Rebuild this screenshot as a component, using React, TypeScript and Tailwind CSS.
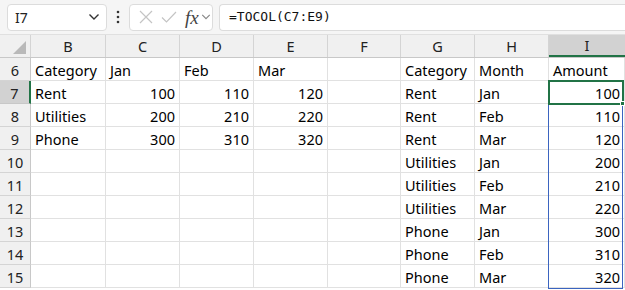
import React from 'react';

const cols = ['B', 'C', 'D', 'E', 'F', 'G', 'H', 'I'];
const widths = [75, 74, 74, 74, 73, 74, 74, 76];

type Cell = { v: string; n?: boolean };

const left: Record<number, Cell[]> = {
  6: [{ v: 'Category' }, { v: 'Jan' }, { v: 'Feb' }, { v: 'Mar' }],
  7: [{ v: 'Rent' }, { v: '100', n: true }, { v: '110', n: true }, { v: '120', n: true }],
  8: [{ v: 'Utilities' }, { v: '200', n: true }, { v: '210', n: true }, { v: '220', n: true }],
  9: [{ v: 'Phone' }, { v: '300', n: true }, { v: '310', n: true }, { v: '320', n: true }],
};

const right: [string, string, string][] = [
  ['Category', 'Month', 'Amount'],
  ['Rent', 'Jan', '100'],
  ['Rent', 'Feb', '110'],
  ['Rent', 'Mar', '120'],
  ['Utilities', 'Jan', '200'],
  ['Utilities', 'Feb', '210'],
  ['Utilities', 'Mar', '220'],
  ['Phone', 'Jan', '300'],
  ['Phone', 'Feb', '310'],
  ['Phone', 'Mar', '320'],
];

function rowCells(r: number): Cell[] {
  const out: Cell[] = [];
  const l = left[r] || [];
  for (let i = 0; i < 4; i++) out.push(l[i] || { v: '' });
  out.push({ v: '' });
  const rr = right[r - 6];
  out.push({ v: rr[0] });
  out.push({ v: rr[1] });
  out.push({ v: rr[2], n: r > 6 });
  return out;
}

const Chevron = ({ className }: { className?: string }) => (
  <svg width="12" height="8" viewBox="0 0 12 8" className={className}>
    <path d="M1.5 1.5 L6 6 L10.5 1.5" fill="none" stroke="currentColor" strokeWidth="1.4" />
  </svg>
);

export default function App() {
  const rows = [6, 7, 8, 9, 10, 11, 12, 13, 14, 15];
  return (
    <div className="w-[625px] h-[290px] overflow-hidden bg-white text-black" style={{ fontFamily: '"Noto Sans", Inter, sans-serif' }}>
      {/* formula bar */}
      <div className="h-[35px] bg-[#f5f5f5] flex items-center pl-[7px] border-b border-[#e0e0e0]">
        <div className="w-[100px] h-[27px] bg-white border border-[#dcdcdc] rounded-[4px] flex items-center justify-between pl-[7px] pr-[6px]">
          <span className="text-[14px] text-[#222]">I7</span>
          <Chevron className="text-[#333]" />
        </div>
        <div className="w-[22px] flex justify-center">
          <svg width="4" height="14" viewBox="0 0 4 14">
            <circle cx="2" cy="2" r="1.3" fill="#333" />
            <circle cx="2" cy="7" r="1.3" fill="#333" />
            <circle cx="2" cy="12" r="1.3" fill="#333" />
          </svg>
        </div>
        <div className="w-[84px] h-[27px] bg-white border border-[#dcdcdc] rounded-[4px] flex items-center pl-[8px]">
          <svg width="16" height="16" viewBox="0 0 16 16">
            <path d="M2 2 L14 14 M14 2 L2 14" stroke="#c4c4c4" strokeWidth="1.2" />
          </svg>
          <svg width="18" height="16" viewBox="0 0 18 16" className="ml-[6px]">
            <path d="M2 8.5 L6.5 13 L16 3" fill="none" stroke="#c4c4c4" strokeWidth="1.2" />
          </svg>
          <span className="ml-[7px] text-[19px] italic text-[#444] leading-none" style={{ fontFamily: '"Liberation Serif", serif' }}>fx</span>
          <Chevron className="ml-[2px] text-[#888] w-[10px]" />
        </div>
        <div className="ml-[6px] flex-1 h-[27px] bg-white border border-[#dcdcdc] rounded-l-[4px] border-r-0 flex items-center pl-[9px]">
          <span className="text-[13px] text-[#111]" style={{ fontFamily: '"DejaVu Sans Mono", monospace' }}>=TOCOL(C7:E9)</span>
        </div>
      </div>

      {/* grid */}
      <div className="relative">
        <div className="flex h-[23px] bg-[#f0f0f0] border-b border-[#c8c8c8]">
          <div className="w-[31px] relative border-r border-[#d4d4d4]">
            <svg width="13" height="13" viewBox="0 0 13 13" className="absolute right-[4px] bottom-[3px]">
              <path d="M13 0 L13 13 L0 13 Z" fill="#b9b9b9" />
            </svg>
          </div>
          {cols.map((c, i) => (
            <div
              key={c}
              style={{ width: widths[i] }}
              className={
                c === 'I'
                  ? 'flex items-center justify-center pt-[1px] text-[14.5px] text-[#222] bg-[#d2d2d2] border-b-2 border-[#217346]'
                  : 'flex items-center justify-center pt-[1px] text-[14.5px] text-[#222] border-r border-[#d4d4d4]'
              }
            >
              {c}
            </div>
          ))}
        </div>
        {rows.map((r) => (
          <div key={r} className="flex h-[23px]">
            <div
              className={
                r === 7
                  ? 'w-[31px] flex items-center justify-center pt-[3px] text-[14.5px] text-[#222] bg-[#d2d2d2] border-r-2 border-[#217346] border-b border-b-[#c8c8c8]'
                  : 'w-[31px] flex items-center justify-center pt-[3px] text-[14.5px] text-[#222] bg-[#f0f0f0] border-r border-[#c8c8c8] border-b border-b-[#d4d4d4]'
              }
            >
              {r}
            </div>
            {rowCells(r).map((cell, i) => (
              <div
                key={i}
                style={{ width: widths[i] }}
                className={
                  cell.n
                    ? 'flex items-center justify-end pr-[4px] pt-[3px] text-[14.5px] border-r border-b border-[#e1e1e1] whitespace-nowrap'
                    : 'flex items-center pl-[4px] pt-[3px] text-[14.5px] border-r border-b border-[#e1e1e1] whitespace-nowrap overflow-hidden'
                }
              >
                {cell.v}
              </div>
            ))}
          </div>
        ))}

        {/* spill range border */}
        <div className="absolute left-[548px] top-[46px] w-[75px] h-[208px] border border-[#3b64c0] pointer-events-none" />
        {/* active cell */}
        <div className="absolute left-[548px] top-[45px] w-[76px] h-[25px] border-2 border-[#217346] pointer-events-none" />
        <div className="absolute left-[620px] top-[66px] w-[5px] h-[5px] bg-[#217346] border border-white pointer-events-none" />
      </div>
    </div>
  );
}
